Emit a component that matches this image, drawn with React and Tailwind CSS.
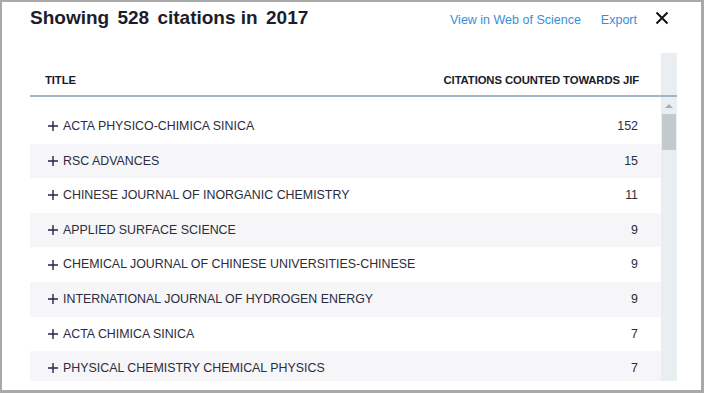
import React from 'react';

const rows = [
    { title: 'ACTA PHYSICO-CHIMICA SINICA', count: 152 },
    { title: 'RSC ADVANCES', count: 15 },
    { title: 'CHINESE JOURNAL OF INORGANIC CHEMISTRY', count: 11 },
    { title: 'APPLIED SURFACE SCIENCE', count: 9 },
    { title: 'CHEMICAL JOURNAL OF CHINESE UNIVERSITIES-CHINESE', count: 9 },
    { title: 'INTERNATIONAL JOURNAL OF HYDROGEN ENERGY', count: 9 },
    { title: 'ACTA CHIMICA SINICA', count: 7 },
    { title: 'PHYSICAL CHEMISTRY CHEMICAL PHYSICS', count: 7 },
];

const App = () => {
    return (
        <div
            className="w-[704px] h-[393px] bg-white border-l-2 border-t-2 border-r-[3px] border-b-[3px] border-[#a9a9a9] overflow-hidden"
            style={{ fontFamily: '"Liberation Sans", Arial, sans-serif' }}
        >
            {/* Kopfzeile */}
            <div className="flex items-center h-[32px] pl-[28px] pr-[32px]">
                <h1 className="text-[19px] font-bold text-[#1c1d2b] flex-1">
                    Showing <span className="ml-[3px]">528</span> <span className="ml-[3px]">citations</span> in <span className="ml-[3px]">2017</span>
                </h1>
                <a className="text-[12.5px] text-[#3a8ddc] mr-[20px] mt-[5px]">View in Web of Science</a>
                <a className="text-[12.5px] text-[#3a8ddc] mr-[18px] mt-[5px]">Export</a>
                <svg width="14" height="14" viewBox="0 0 14 14" className="mt-[-1px]">
                    <path d="M1.5 1.5 L12.5 12.5 M12.5 1.5 L1.5 12.5" stroke="#111" strokeWidth="2" />
                </svg>
            </div>

            {/* Tabelle */}
            <div className="ml-[28px] w-[647px] mt-[19px]">
                <div className="flex h-[44px] border-b-2 border-[#a4b6c4]">
                    <div className="flex-1 flex items-center justify-between pl-[15px] pr-[22px] pt-[12px] text-[11.3px] font-bold text-[#1a1b2c] tracking-[-0.1px]">
                        <span>TITLE</span>
                        <span>CITATIONS COUNTED TOWARDS JIF</span>
                    </div>
                    <div className="w-[16px] bg-[#e9eff0]" />
                </div>

                <div className="flex h-[284px]">
                    <div className="flex-1 pt-[12px] overflow-hidden">
                        {rows.map((r, i) => (
                            <div
                                key={r.title}
                                className={`flex items-center justify-between h-[34.6px] pl-[18px] pr-[23px] text-[12.4px] text-[#2b2c3c] ${i % 2 === 1 ? 'bg-[#f6f6f8]' : 'bg-white'}`}
                            >
                                <span className="flex items-center">
                                    <svg width="10" height="10" viewBox="0 0 10 10" className="mr-[5px]">
                                        <path d="M5 0 V10 M0 5 H10" stroke="#23244a" strokeWidth="1.4" />
                                    </svg>
                                    {r.title}
                                </span>
                                <span>{r.count}</span>
                            </div>
                        ))}
                    </div>
                    {/* Scrollleiste */}
                    <div className="w-[16px] bg-[#e9eff0] flex flex-col items-center">
                        <svg width="8" height="5" viewBox="0 0 8 5" className="mt-[6px]">
                            <path d="M0 5 L4 1 L8 5 Z" fill="#a6b0b4" />
                        </svg>
                        <div className="w-[14px] h-[36px] bg-[#c2cace] mt-[6px]" />
                    </div>
                </div>
            </div>
        </div>
    );
};

export default App;
